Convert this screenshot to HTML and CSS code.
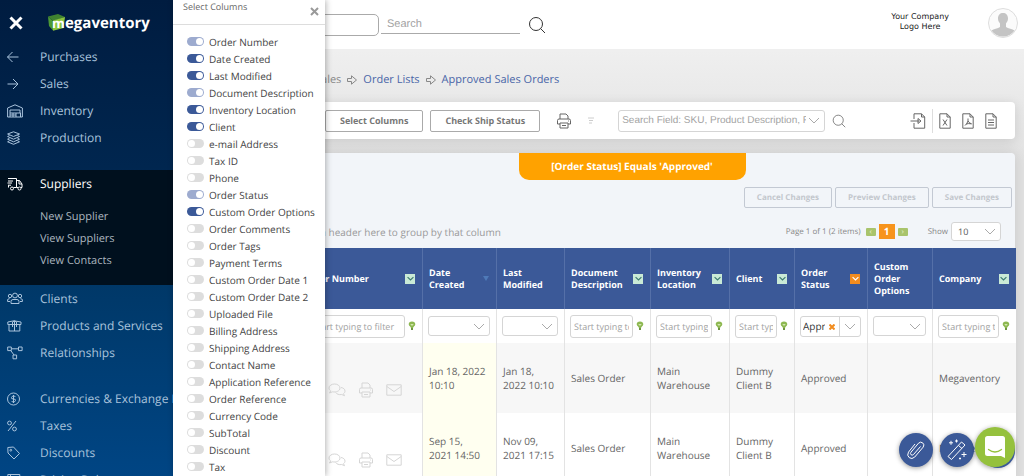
FILE: index.html
```html
<!DOCTYPE html>
<html lang="en">
<head>
<meta charset="utf-8">
<title>Approved Sales Orders</title>
<link rel="stylesheet" href="styles.css">
</head>
<body>

<!-- shared icons -->
<svg class="sprite" width="0" height="0">
  <symbol id="chevron" viewBox="0 0 12 7"><path d="M1 1l5 5 5-5"/></symbol>
  <symbol id="search" viewBox="0 0 18 18"><circle cx="8" cy="8" r="6.5"/><path d="M12.6 12.6L17 17"/></symbol>
  <symbol id="arrow" viewBox="0 0 10 10"><path d="M.5 3.5h4V.8L9.500 5 4.500 9.200V6.500h-4z"/></symbol>
  <symbol id="bulb" viewBox="0 0 8 10"><path class="bulb-top" d="M4 .5C1.800.5.7 1.700.7 3.200.7 4.800 3 6 3 7h2c0-1 2.300-2.200 2.300-3.800C7.300 1.700 6.200.5 4 .5z"/><path class="bulb-light" d="M2.200 3h3.600L4 5z"/><path class="bulb-base" d="M3 7h2v2H3z"/></symbol>
  <symbol id="printer" viewBox="0 0 16 16"><path d="M4 6V1h6l2 2v3M4 11H1.500V7.500Q1.500 6 3 6h10q1.500 0 1.500 1.500V11H12M4 10h8v5H4zM6 12.500h4M12 8h.8"/></symbol>
  <symbol id="chat" viewBox="0 0 18 14"><path d="M6.500 1C3.500 1 1 2.700 1 5c0 1.200.6 2.200 1.600 2.900L1.500 10l3-1.200c3.600.8 7.500-.8 7.500-3.800 0-2.300-2.500-4-5.500-4zM13 4.500c2.300.3 4 1.700 4 3.500 0 1.200-.6 2-1.500 2.700l1 2-2.800-1.200c-2.700.5-5-.3-6-2"/></symbol>
  <symbol id="mail" viewBox="0 0 16 12"><path d="M.8.8h14.400v10.400H.8zM.8 2.500L8 7.500l7.200-5"/></symbol>
  <symbol id="doc" viewBox="0 0 12 16"><path d="M.8.8H8l3.200 3.200v11.200H.8zM8 .8V4h3.200"/></symbol>
</svg>

<aside class="sidebar">
  <div class="brand">
    <button class="close-menu" aria-label="Close menu"><svg width="14" height="14" viewBox="0 0 14 14"><path d="M1.500 1.500l11 11M12.500 1.500l-11 11"/></svg></button>
    <a class="logo" href="#" aria-label="megaventory">
      <svg width="17" height="17" viewBox="0 0 17 17">
        <path fill="#4d9a35" d="M0 2.500L5 7v9.500L1 12z"/>
        <path fill="#3f8230" d="M0 2.500L10 0l7 3-12 4z"/>
        <path fill="#8cc63f" d="M5 6.500L17 3l-1.500 11L5 16.800z"/>
        <text x="4" y="14">m</text>
      </svg>
      <span>egaventory</span>
    </a>
  </div>
  <nav>
    <ul class="menu">
      <li><a href="#"><svg width="16" height="14" viewBox="0 0 16 14"><path d="M11.500 7h-11M5.500 2l-5 5 5 5"/></svg>Purchases</a></li>
      <li><a href="#"><svg width="16" height="14" viewBox="0 0 16 14"><path d="M.5 7h10.500M6 2l5 5-5 5"/></svg>Sales</a></li>
      <li><a href="#"><svg width="16" height="14" viewBox="0 0 16 14"><path d="M.6 13V4L8 .8 15.400 4v9h-2M.6 13H3V6h10v3M3 9h6v4H3M6 9v4M9 9h4.500v4H9M3 11h6"/></svg>Inventory</a></li>
      <li><a href="#"><svg width="16" height="14" viewBox="0 0 16 14"><path d="M6.500.8l6 2.200-6 2.500L.6 3zM2.500 4.500L.6 5.500l5.900 2.700 6-2.700-2-1M2.500 7.200l-1.900 1 5.900 2.600 6-2.600-2-1M2.500 9.800l-1.900 1 5.900 2.500 6-2.500-2-1"/></svg>Production</a></li>
    </ul>
    <div class="current">
      <a class="current-title" href="#"><svg width="16" height="14" viewBox="0 0 16 14"><path d="M1 1.500h8.500v9H6.500M1 4h5M.5 6h4.500M1 8.200h3M1.500 8.200v2.300M9.500 3.500h3L15 7v3.500h-1M9.500 10.500h1.500M12 3.500V7h3"/><circle cx="5" cy="11.500" r="1.500"/><circle cx="12.500" cy="11.500" r="1.500"/></svg>Suppliers</a>
      <ul class="submenu">
        <li><a href="#">New Supplier</a></li>
        <li><a href="#">View Suppliers</a></li>
        <li><a href="#">View Contacts</a></li>
      </ul>
    </div>
    <ul class="menu">
      <li><a href="#"><svg width="16" height="14" viewBox="0 0 16 14"><circle cx="3" cy="4" r="1.700"/><circle cx="8" cy="3.500" r="2.400"/><circle cx="13" cy="4" r="1.700"/><path d="M4 11.500V9.500Q4 7.500 6 7.500h4q2 0 2 2v2zM3 9.500H.6V8q0-1.300 2-1.300M13 9.500h2.400V8q0-1.300-2-1.300"/></svg>Clients</a></li>
      <li><a href="#"><svg width="16" height="14" viewBox="0 0 16 14"><path d="M.8 3L7 1.800l7 1.200v2.500H.8zM2 5.500V12h10.800V5.500M5.500 3v5M7.500 2v10M9.500 3v5M5.500 3q2-2 4 0"/></svg>Products and Services</a></li>
      <li><a href="#"><svg width="16" height="14" viewBox="0 0 16 14"><path d="M.7 1h3.600v3.600H.7zM11.500 1h3.600v3.600h-3.600zM6 9h3.600v3.800H6zM4.300 2.800h7.200M3.800 4.600L7 9"/></svg>Relationships</a></li>
    </ul>
    <ul class="menu menu-last">
      <li><a href="#"><svg width="16" height="14" viewBox="0 0 16 14"><circle cx="6.500" cy="7" r="6"/><path d="M8.500 5Q8 4 6.500 4T4.500 5.500t2 1.500 2 1.500-2 1.500-2-1M6.500 3v8"/></svg>Currencies &amp; Exchange Rates</a></li>
      <li><a href="#"><svg width="16" height="14" viewBox="0 0 16 14"><path d="M9 2L1 12"/><circle cx="2.500" cy="4" r="1.900"/><circle cx="7.500" cy="10" r="1.900"/></svg>Taxes</a></li>
      <li><a href="#"><svg width="16" height="14" viewBox="0 0 16 14"><path d="M.8 1.500L6.500 1 12.500 7.500 7 13 1 7z"/><circle cx="3.800" cy="4.200" r=".9"/></svg>Discounts</a></li>
      <li><a href="#"><svg width="16" height="14" viewBox="0 0 16 14"><path d="M.8 1.500h12v11H.8zM3.500 1.500v7H.8M6 4.500h4"/></svg>Pricing Rules</a></li>
    </ul>
  </nav>
</aside>

<main class="main">
  <header class="topbar">
    <select class="scope" aria-label="Search in"></select>
    <input class="global-search" type="text" placeholder="Search" aria-label="Search">
    <button class="icon-btn search-btn" aria-label="Search"><svg width="18" height="18"><use href="#search"/></svg></button>
    <div class="company">Your Company<br>Logo Here</div>
    <svg class="avatar" width="30" height="30" viewBox="0 0 30 30">
      <circle cx="15" cy="15" r="14.500" fill="#fbfbfb" stroke="#ddd"/>
      <path fill="#c4c4c4" stroke="none" d="M15 5c-3 0-5 2-5 5.500 0 2 .8 3.500 2 5V19c-2 1.500-6.500 2.200-8.500 3.500A14 14 0 0 0 26.500 22.500C24.500 21.200 20 20.500 18 19v-3.500c1.200-1.500 2-3 2-5C20 7 18 5 15 5z"/>
    </svg>
  </header>

  <nav class="crumbs">
    <span>Sales</span>
    <svg width="10" height="10"><use href="#arrow"/></svg>
    <a href="#">Order Lists</a>
    <svg width="10" height="10"><use href="#arrow"/></svg>
    <a href="#">Approved Sales Orders</a>
  </nav>

  <section class="toolbar">
    <button class="btn">Select Columns</button>
    <button class="btn">Check Ship Status</button>
    <button class="icon-btn print-btn" aria-label="Print"><svg width="16" height="16"><use href="#printer"/></svg></button>
    <button class="icon-btn filter-btn" aria-label="Clear filter"><svg width="6" height="8" viewBox="0 0 6 8"><path d="M0 1h6M1 3.500h4M1 6h3"/></svg></button>
    <div class="combo field-search">
      <input type="text" placeholder="Search Field: SKU, Product Description, F" aria-label="Search field">
      <svg class="chev" width="12" height="7"><use href="#chevron"/></svg>
    </div>
    <button class="icon-btn" aria-label="Search orders"><svg width="14" height="14"><use href="#search"/></svg></button>
    <div class="exports">
      <button class="icon-btn import" aria-label="Import"><svg width="16" height="16" viewBox="0 0 16 16"><path d="M4 6V.8h7.500l3.200 3.200v11.200H4V10M11.500.8V4h3.200M.5 8h9M8 5.500v5L11 8z"/></svg></button>
      <button class="icon-btn" aria-label="Export to Excel"><svg width="12" height="16"><use href="#doc"/><path d="M4 6.500l4 6M8 6.500l-4 6"/></svg></button>
      <button class="icon-btn" aria-label="Export to PDF"><svg width="12" height="16"><use href="#doc"/><path d="M6 5.500v2.500Q5 11 3 12.500M6 8q1.500 2.500 3.500 2.800Q6 10.300 4 11"/></svg></button>
      <button class="icon-btn" aria-label="Export to text"><svg width="12" height="16"><use href="#doc"/><path d="M3 7h6M3 9.500h6M3 12h6"/></svg></button>
    </div>
  </section>

  <section class="grid-card">
    <div class="filter-tag">[Order Status] Equals 'Approved'</div>
    <div class="changes">
      <button class="btn" disabled>Cancel Changes</button>
      <button class="btn" disabled>Preview Changes</button>
      <button class="btn" disabled>Save Changes</button>
    </div>
    <div class="pager">
      <span class="group-hint">Drag a column header here to group by that column</span>
      <span class="page-info">Page 1 of 1 (2 items)</span>
      <button class="page-step" aria-label="Previous page">‹</button>
      <button class="page-num">1</button>
      <button class="page-step" aria-label="Next page">›</button>
      <label for="page-size">Show</label>
      <div class="combo page-size">
        <select id="page-size"><option>10</option><option>20</option><option>50</option></select>
        <svg class="chev" width="12" height="7"><use href="#chevron"/></svg>
      </div>
    </div>

    <table class="orders">
      <colgroup>
        <col class="c-number"><col class="c-created"><col class="c-modified"><col class="c-desc"><col class="c-loc"><col class="c-client"><col class="c-status"><col class="c-options"><col class="c-company">
      </colgroup>
      <thead>
        <tr class="heads">
          <th><div><span class="number-head">Order Number</span><i class="box"><svg width="7" height="5"><use href="#chevron"/></svg></i></div></th>
          <th><div><span>Date Created</span><i class="sorted"></i></div></th>
          <th><div><span>Last Modified</span></div></th>
          <th><div><span>Document Description</span><i class="box"><svg width="7" height="5"><use href="#chevron"/></svg></i></div></th>
          <th><div><span>Inventory Location</span><i class="box"><svg width="7" height="5"><use href="#chevron"/></svg></i></div></th>
          <th><div><span>Client</span><i class="box"><svg width="7" height="5"><use href="#chevron"/></svg></i></div></th>
          <th><div><span>Order Status</span><i class="box active"><svg width="7" height="5"><use href="#chevron"/></svg></i></div></th>
          <th><div><span>Custom Order Options</span></div></th>
          <th><div><span>Company</span><i class="box"><svg width="7" height="5"><use href="#chevron"/></svg></i></div></th>
        </tr>
        <tr class="filters">
          <td><div class="number-filter"><input type="text" placeholder="Start typing to filter" aria-label="Filter order number"><svg class="bulb" width="8" height="10"><use href="#bulb"/></svg></div></td>
          <td><div class="combo"><select aria-label="Filter date created"></select><svg class="chev" width="12" height="7"><use href="#chevron"/></svg></div></td>
          <td><div class="combo"><select aria-label="Filter last modified"></select><svg class="chev" width="12" height="7"><use href="#chevron"/></svg></div></td>
          <td><div class="text-filter"><input type="text" placeholder="Start typing to filter" aria-label="Filter description"><svg class="bulb" width="8" height="10"><use href="#bulb"/></svg></div></td>
          <td><div class="text-filter"><input type="text" placeholder="Start typing to filter" aria-label="Filter location"><svg class="bulb" width="8" height="10"><use href="#bulb"/></svg></div></td>
          <td><div class="text-filter"><input type="text" placeholder="Start typing to filter" aria-label="Filter client"><svg class="bulb" width="8" height="10"><use href="#bulb"/></svg></div></td>
          <td><div class="status-filter"><input type="text" value="Approved" aria-label="Filter status"><button class="clear" aria-label="Clear status"><svg width="6" height="6" viewBox="0 0 6 6"><path d="M.5.5l5 5M5.500.5l-5 5"/></svg></button><button class="open" aria-label="Open statuses"><svg class="chev" width="12" height="7"><use href="#chevron"/></svg></button></div></td>
          <td><div class="combo"><select aria-label="Filter options"></select><svg class="chev" width="12" height="7"><use href="#chevron"/></svg></div></td>
          <td><div class="text-filter"><input type="text" placeholder="Start typing to filter" aria-label="Filter company"><svg class="bulb" width="8" height="10"><use href="#bulb"/></svg></div></td>
        </tr>
      </thead>
      <tbody>
        <tr>
          <td><div class="row-icons"><svg width="18" height="14"><use href="#chat"/></svg><svg width="16" height="16"><use href="#printer"/></svg><svg width="16" height="12"><use href="#mail"/></svg></div></td>
          <td class="sorted-col">Jan 18, 2022 10:10</td>
          <td>Jan 18, 2022 10:10</td>
          <td>Sales Order</td>
          <td>Main Warehouse</td>
          <td>Dummy Client B</td>
          <td>Approved</td>
          <td></td>
          <td>Megaventory</td>
        </tr>
        <tr>
          <td><div class="row-icons"><svg width="18" height="14"><use href="#chat"/></svg><svg width="16" height="16"><use href="#printer"/></svg><svg width="16" height="12"><use href="#mail"/></svg></div></td>
          <td class="sorted-col">Sep 15, 2021 14:50</td>
          <td>Nov 09, 2021 17:15</td>
          <td>Sales Order</td>
          <td>Main Warehouse</td>
          <td>Dummy Client B</td>
          <td>Approved</td>
          <td></td>
          <td>Megaventory</td>
        </tr>
      </tbody>
    </table>
  </section>
</main>

<!-- column chooser, slides over the grid -->
<div class="picker">
  <div class="picker-head">
    <span>Select Columns</span>
    <button class="icon-btn" aria-label="Close"><svg width="9" height="9" viewBox="0 0 9 9"><path d="M1 1l7 7M8 1L1 8"/></svg></button>
  </div>
  <div class="picker-list">
    <label><input type="checkbox" checked disabled>Order Number</label>
    <label><input type="checkbox" checked>Date Created</label>
    <label><input type="checkbox" checked>Last Modified</label>
    <label><input type="checkbox" checked disabled>Document Description</label>
    <label><input type="checkbox" checked>Inventory Location</label>
    <label><input type="checkbox" checked>Client</label>
    <label><input type="checkbox">e-mail Address</label>
    <label><input type="checkbox">Tax ID</label>
    <label><input type="checkbox">Phone</label>
    <label><input type="checkbox" checked disabled>Order Status</label>
    <label><input type="checkbox" checked>Custom Order Options</label>
    <label><input type="checkbox">Order Comments</label>
    <label><input type="checkbox">Order Tags</label>
    <label><input type="checkbox">Payment Terms</label>
    <label><input type="checkbox">Custom Order Date 1</label>
    <label><input type="checkbox">Custom Order Date 2</label>
    <label><input type="checkbox">Uploaded File</label>
    <label><input type="checkbox">Billing Address</label>
    <label><input type="checkbox">Shipping Address</label>
    <label><input type="checkbox">Contact Name</label>
    <label><input type="checkbox">Application Reference</label>
    <label><input type="checkbox">Order Reference</label>
    <label><input type="checkbox">Currency Code</label>
    <label><input type="checkbox">SubTotal</label>
    <label><input type="checkbox">Discount</label>
    <label><input type="checkbox">Tax</label>
  </div>
</div>

<div class="floating">
  <button class="round" aria-label="Attachments"><svg width="22" height="22" viewBox="0 0 22 22"><path d="M15.500 7.500l-7 8q-1.300 1.200-2.500.2t0-2.500l7.500-9q2-2 4.200-.3t.5 4.200l-8.500 10q-2.800 2.600-5.500.5t-.7-5.500L10 5"/></svg></button>
  <button class="round" aria-label="Quick actions"><svg width="22" height="22" viewBox="0 0 22 22"><path d="M2 17.500L15.500 3l3.500 3L5.500 20.500zM12.500 6.500L16 9.500M5 1.800v4M3 3.800h4M10.500.5v3M9 2h3M18 13v5M15.500 15.500h5M14 18.500v2M13 19.500h2"/></svg></button>
  <button class="round chat" aria-label="Chat"><svg width="20" height="22" viewBox="0 0 20 22"><path fill="#fff" d="M2.500 0h15Q20 0 20 2.500V22l-4-2H2.500Q0 20 0 17.500v-15Q0 0 2.500 0z"/><path d="M3.500 13.500q6.500 5 13 0" fill="none" stroke="#95c13d" stroke-width="1.300" stroke-linecap="round"/></svg></button>
</div>

</body>
</html>
```
FILE: styles.css
```css
* {
  box-sizing: border-box;
}
body {
  margin: 0;
  height: 100vh;
  overflow: hidden;
  display: flex;
  font-family: "Open Sans", "Noto Sans", sans-serif;
  font-size: 10px;
  text-rendering: geometricPrecision;
  color: #666;
  background: #e4e4e4;
}
ul {
  list-style: none;
  margin: 0;
  padding: 0;
}
a {
  text-decoration: none;
  color: inherit;
}
button, input, select {
  font: inherit;
  color: inherit;
  margin: 0;
  border-radius: 0;
  text-rendering: inherit;
}
button {
  padding: 0;
  border: none;
  background: none;
  cursor: pointer;
}
svg {
  fill: none;
  stroke: currentColor;
  flex-shrink: 0;
}
.sprite {
  position: absolute;
}
.icon-btn {
  display: flex;
}

/* sidebar */
.sidebar {
  flex: 0 0 173px;
  overflow: hidden;
  white-space: nowrap;
  font-size: 12px;
  color: #a9c3dc;
  background: linear-gradient(#001c40, #00264f 35%, #003868 60%, #004584);
}
.brand {
  display: flex;
  align-items: center;
  height: 43px;
  padding: 2px 9px 0;
  color: #fff;
}
.close-menu {
  display: flex;
  width: 39px;
}
.close-menu svg {
  stroke-width: 3;
}
.logo {
  display: flex;
  align-items: center;
  font-size: 15px;
  font-weight: 700;
  line-height: 22px;
}
.logo svg {
  stroke: none;
}
.logo text {
  fill: #fff;
  font-size: 13px;
}
.menu a, .current-title {
  display: flex;
  align-items: center;
  gap: 17px;
  height: 27px;
  padding-left: 7px;
}
.menu-last {
  padding-top: 19px;
}
.current {
  margin-top: 19px;
  height: 115px;
  color: #aab5bf;
  background: #00101e;
}
.current-title {
  color: #fff;
}
.submenu {
  padding: 9px 0 0 40px;
  font-size: 11px;
  line-height: 22px;
}

/* page */
.main {
  flex: 1;
  min-width: 0;
  background: linear-gradient(#efefef 50px, #e2e2e2 160px);
}
.topbar {
  display: flex;
  align-items: center;
  height: 49px;
  padding: 0 6px 0 76px;
  background: #fff;
}
.scope {
  width: 130px;
  height: 22px;
  border: 1px solid #aaa;
  border-radius: 5px;
  background: #fff;
  appearance: none;
}
.global-search {
  width: 139px;
  height: 19px;
  margin-left: 2px;
  padding: 0 6px;
  border: none;
  border-bottom: 1px solid #aaa;
  font-family: "Liberation Sans", Arial, sans-serif;
  font-size: 11px;
}
input {
  outline: none;
}
input::placeholder {
  color: #a3a3a3;
  opacity: 1;
}
.search-btn {
  margin-left: 8px;
  color: #333;
}
.company {
  margin-left: auto;
  margin-right: 39px;
  margin-bottom: 5px;
  text-align: center;
  font-family: "DejaVu Sans", Verdana, sans-serif;
  font-size: 8px;
  line-height: 10px;
  color: #222;
}
.avatar {
  margin-bottom: 4px;
}
.crumbs {
  display: flex;
  align-items: center;
  gap: 6px;
  height: 53px;
  padding: 8px 0 0 142px;
  font-size: 11px;
  color: #888;
}
.crumbs a {
  color: #4a66a8;
}
.toolbar {
  display: flex;
  align-items: center;
  gap: 7px;
  height: 37px;
  margin: 0 9px 0 76px;
  padding: 0 18px 0 76px;
  border-radius: 4px;
  background: #fff;
  box-shadow: 0 2px 12px rgba(0, 0, 0, 0.12);
  color: #666;
}
.btn {
  height: 22px;
  padding: 0 14px;
  border: 1px solid #aaa;
  border-radius: 2px;
  background: #fff;
  font-size: 9px;
  font-weight: 700;
  color: #777;
  white-space: nowrap;
}
.print-btn {
  margin-left: 9px;
}
.filter-btn {
  margin: 0 17px 0 9px;
  color: #ccc;
}
.combo {
  display: grid;
  align-items: center;
  height: 20px;
  border: 1px solid #d5d5d5;
  border-radius: 3px;
  background: #fff;
}
.combo > * {
  grid-area: 1 / 1;
}
.combo input, .combo select {
  width: 100%;
  min-width: 0;
  height: 100%;
  padding: 0 18px 0 3px;
  border: none;
  background: transparent;
  appearance: none;
}
.chev {
  justify-self: end;
  margin-right: 4px;
  color: #aaa;
  pointer-events: none;
}
.field-search {
  flex: 0 1 207px;
  height: 22px;
  font-family: "Liberation Sans", Arial, sans-serif;
}
.exports {
  display: flex;
  align-items: center;
  gap: 11px;
  margin-left: auto;
}
.import {
  height: 24px;
  align-items: center;
  margin-right: -5px;
  padding-right: 6px;
  border-right: 1px solid #ddd;
}

/* grid */
.grid-card {
  margin: 14px 9px 0 76px;
  border-radius: 4px 4px 0 0;
  background: #f2f5f9;
  box-shadow: 0 0 14px rgba(0, 0, 0, 0.12);
}
.filter-tag {
  width: 227px;
  margin: 0 auto;
  border-radius: 0 0 10px 10px;
  background: #ffa200;
  color: #fff;
  font-weight: 700;
  line-height: 27px;
  text-align: center;
}
.changes {
  display: flex;
  justify-content: flex-end;
  gap: 3px;
  padding: 7px 3px 0 0;
}
.changes .btn {
  height: 21px;
  padding: 0 12px;
  border-color: #c3c9d3;
  background: transparent;
  font-size: 8px;
  color: #c3c7cd;
}
.pager {
  display: flex;
  align-items: center;
  gap: 3px;
  height: 40px;
  padding: 7px 14px 0 9px;
  font-size: 8px;
  color: #888;
}
.group-hint {
  margin-right: auto;
  font-size: 10px;
  color: #999;
}
.page-info {
  margin-right: 2px;
}
.page-step {
  width: 10px;
  height: 8px;
  border-radius: 1px;
  background: #a9c46c;
  color: #e4efc8;
  line-height: 6px;
}
.page-num {
  width: 16px;
  height: 15px;
  background: #f7941d;
  color: #fff;
  font-size: 10px;
  font-weight: 700;
  line-height: 15px;
}
.pager label {
  margin-left: 17px;
}
.page-size {
  width: 50px;
  height: 19px;
  font-size: 9px;
  color: #555;
}
.page-size select {
  padding-left: 6px;
}
.orders {
  width: 100%;
  table-layout: fixed;
  border-collapse: collapse;
  background: #fff;
}
.c-number { width: 173px; }
.c-created { width: 74px; }
.c-modified { width: 68px; }
.c-desc { width: 86px; }
.c-loc { width: 79px; }
.c-client { width: 65px; }
.c-status { width: 73px; }
.c-options { width: 65px; }
.c-company { width: 83px; }
.heads {
  height: 61px;
  background: #3b5998;
}
th {
  padding: 0 7px 0 6px;
  border-left: 1px solid #5570a8;
  text-align: left;
  font-size: 9px;
  line-height: 12px;
  color: #fff;
}
th div {
  display: flex;
  align-items: center;
  justify-content: space-between;
}
th span {
  width: min-content;
}
th .number-head {
  width: auto;
  padding-left: 47px;
}
.box {
  display: flex;
  align-items: center;
  justify-content: center;
  width: 10px;
  height: 10px;
  background: #c9ead6;
  color: #3c7a70;
}
.box svg {
  stroke-width: 2;
}
.box.active {
  background: #f28c1e;
  color: #fff;
}
.sorted {
  border: 3px solid transparent;
  border-top: 5px solid #4f7ab8;
  border-bottom: 0;
}
.filters {
  height: 34px;
}
.orders td {
  border-left: 1px solid #e3e3e3;
}
.filters td {
  padding: 0 6px 0 5px;
}
.text-filter, .number-filter {
  display: flex;
  align-items: center;
  gap: 3px;
  font-size: 9px;
}
.number-filter {
  padding-left: 54px;
}
.text-filter input, .number-filter input {
  flex: 1;
  min-width: 0;
  height: 23px;
  padding: 0 3px;
  border: 1px solid #d5d5d5;
  border-radius: 3px;
}
.bulb {
  stroke: none;
}
.bulb-top { fill: #8db851; }
.bulb-light { fill: #d3e6b0; }
.bulb-base { fill: #6d9440; }
.status-filter {
  display: flex;
  height: 21px;
  border: 1px solid #d5d5d5;
  border-radius: 3px;
  color: #333;
}
.status-filter input {
  flex: 1;
  min-width: 0;
  padding: 0 0 0 2px;
  border: none;
  background: transparent;
}
.clear {
  width: 14px;
  color: #f28c1e;
}
.clear svg {
  stroke-width: 2;
}
.open {
  width: 21px;
  border-left: 1px solid #d5d5d5;
}
.open .chev {
  margin: 0;
}
tbody tr {
  height: 70px;
}
tbody tr:nth-child(odd) {
  background: #f7f7f7;
}
tbody td {
  padding: 0 6px;
  line-height: 14px;
}
tbody .sorted-col {
  padding-right: 10px;
  background: #fffff0;
}
.row-icons {
  display: flex;
  align-items: center;
  justify-content: flex-end;
  gap: 12px;
  padding: 24px 14px 0 0;
  color: #d5d5d5;
}

/* column chooser */
.picker {
  position: absolute;
  top: 0;
  bottom: 0;
  left: 173px;
  width: 152px;
  overflow: hidden;
  background: #fff;
  box-shadow: 1px 0 6px rgba(0, 0, 0, 0.3);
}
.picker-head {
  display: flex;
  justify-content: space-between;
  height: 25px;
  padding: 0 6px 0 10px;
  border-bottom: 1px solid #ddd;
  font-size: 8px;
  line-height: 14px;
}
.picker-head span {
  font-size: 9px;
}
.picker-head .icon-btn {
  margin-top: 7px;
  color: #999;
}
.picker-head svg {
  stroke-width: 2;
}
.picker-list {
  padding: 8px 0 0 14px;
  color: #444;
}
.picker-list label {
  display: flex;
  align-items: center;
  gap: 5px;
  height: 17px;
  white-space: nowrap;
}
.picker-list input {
  display: flex;
  align-items: center;
  width: 17px;
  height: 9px;
  padding: 1px;
  border-radius: 5px;
  background: #ddd;
  appearance: none;
}
.picker-list input::before {
  content: "";
  width: 7px;
  height: 7px;
  border-radius: 50%;
  background: #fff;
}
.picker-list input:checked {
  justify-content: flex-end;
  background: #3b5998;
}
.picker-list input:disabled {
  background: #9dabcf;
}

/* floating buttons */
.floating {
  position: fixed;
  right: 9px;
  bottom: 9px;
  display: flex;
  align-items: flex-end;
  gap: 7px;
}
.round {
  display: flex;
  align-items: center;
  justify-content: center;
  width: 34px;
  height: 34px;
  border-radius: 50%;
  background: #3b5998;
  box-shadow: 0 1px 5px rgba(0, 0, 0, 0.4);
  color: #fff;
}
.round.chat {
  width: 40px;
  height: 40px;
  margin-left: -6px;
  background: #95c13d;
  box-shadow: 3px 4px 0 -3px #3b5998, 0 1px 5px rgba(0, 0, 0, 0.4);
}
.chat svg {
  stroke: none;
}
```
